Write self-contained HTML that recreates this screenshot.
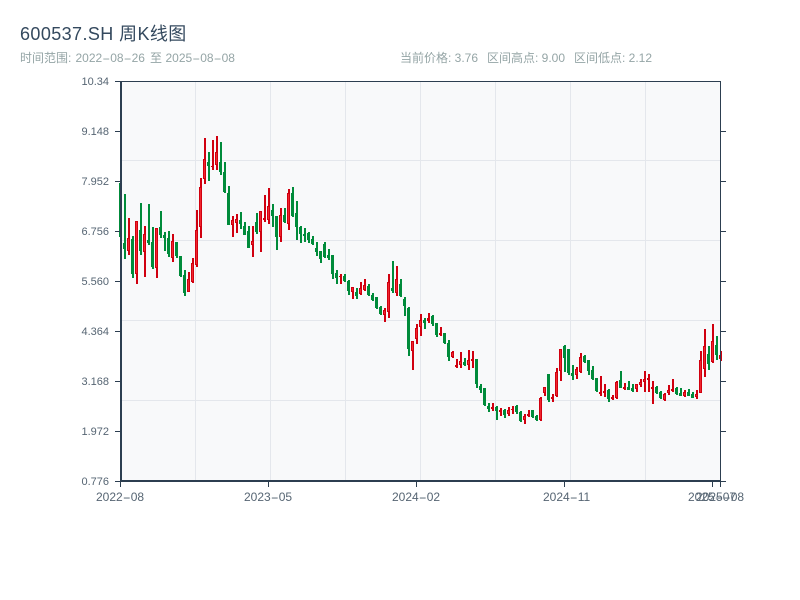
<!DOCTYPE html>
<html><head><meta charset="utf-8"><style>
html,body{margin:0;padding:0;background:#fff}
svg{display:block}
text{font-family:"Liberation Sans","Noto Sans CJK SC",sans-serif}
</style></head><body>
<svg width="800" height="600" viewBox="0 0 800 600" xmlns="http://www.w3.org/2000/svg">
<rect x="120" y="81" width="601" height="400" fill="#f8f9fa"/>
<g fill="#e4e7ec">
<rect x="121" y="160" width="600" height="1"/><rect x="121" y="240" width="600" height="1"/><rect x="121" y="320" width="600" height="1"/><rect x="121" y="400" width="600" height="1"/>
<rect x="195" y="81" width="1" height="400"/><rect x="270" y="81" width="1" height="400"/><rect x="345" y="81" width="1" height="400"/><rect x="420" y="81" width="1" height="400"/><rect x="495" y="81" width="1" height="400"/><rect x="570" y="81" width="1" height="400"/><rect x="645" y="81" width="1" height="400"/>
</g>
<path fill="none" stroke="#008b3a" stroke-width="2" d="M120 183V237M125 194V259M133 236V278M141 203V255M149 204V245M153 227V269M161 211V238M165 232V251M169 231V257M177 242V258M181 256V277M185 270V296M209 152V181M221 142V175M225 162V193M229 186V225M241 212V229M245 222V235M249 226V248M257 213V234M273 204V227M277 216V250M285 208V223M293 187V217M297 201V240M301 226V243M305 228V242M309 232V243M313 236V245M317 242V256M321 251V263M325 242V258M329 249V260M333 255V279M337 270V284M345 274V282M349 280V295M357 288V299M369 284V296M373 293V301M377 297V309M381 306V315M393 261V293M401 279V297M405 297V316M409 307V356M425 318V329M433 315V326M437 323V337M445 333V344M449 340V361M465 358V366M477 359V388M481 384V393M485 388V406M489 403V412M497 406V420M505 409V418M517 405V414M521 411V422M533 410V418M537 415V421M549 374V402M565 345V372M569 349V375M573 365V380M585 355V363M589 360V375M593 366V380M597 378V392M609 389V402M621 371V388M629 381V390M633 384V392M657 386V394M661 391V399M677 387V395M681 388V396M689 389V396M693 392V398M709 346V370M717 336V360"/>
<path fill="none" stroke="#008b3a" stroke-width="3" d="M124.5 243V249M132.5 239V274M140.5 230V251M148.5 240V243M152.5 242V267M160.5 227V235M164.5 235V238M168.5 238V254M176.5 242V256M180.5 256V276M184.5 275V293M208.5 162V166M220.5 162V172M224.5 172V192M228.5 193V225M240.5 220V224M244.5 226V235M248.5 231V248M256.5 222V232M272.5 210V216M276.5 216V237M284.5 215V222M292.5 193V216M296.5 213V227M300.5 227V234M304.5 234V236M308.5 233V240M312.5 239V244M316.5 248V252M320.5 251V259M324.5 244V257M328.5 255V258M332.5 255V274M336.5 273V278M344.5 276V281M348.5 281V291M356.5 292V296M368.5 286V295M372.5 295V300M376.5 297V308M380.5 307V314M392.5 288V291M400.5 284V296M404.5 299V306M408.5 308V349M424.5 320V323M432.5 316V324M436.5 323V335M444.5 333V343M448.5 343V357M464.5 362V365M476.5 359V384M480.5 386V390M484.5 388V405M488.5 406V409M496.5 407V411M504.5 410V415M516.5 406V412M520.5 412V421M532.5 410V417M536.5 416V420M548.5 374V400M564.5 346V358M568.5 349V373M572.5 373V376M584.5 356V362M588.5 360V371M592.5 370V379M596.5 378V391M608.5 390V399M620.5 380V388M628.5 387V390M632.5 388V391M656.5 387V393M660.5 392V398M676.5 388V394M680.5 393V396M688.5 392V396M692.5 394V398M708.5 354V364M716.5 345V355"/>
<path fill="none" stroke="#d0000f" stroke-width="2" d="M129 218V255M137 221V284M145 226V277M157 228V278M173 234V262M189 272V292M193 258V283M197 210V267M201 178V238M205 138V184M213 140V170M217 136V170M233 216V237M237 214V233M253 226V257M261 211V252M265 195V222M269 188V224M281 208V242M289 189V230M341 274V284M353 287V299M361 282V295M365 279V291M385 308V322M389 274V318M397 266V296M413 341V370M417 324V344M421 314V336M429 313V323M441 327V336M453 351V358M457 359V368M461 352V368M469 350V370M473 351V368M493 403V411M501 408V416M509 407V416M513 406V414M525 414V424M529 410V417M541 397V421M545 387V396M553 394V402M557 368V397M561 349V381M577 367V379M581 353V373M601 376V396M605 384V397M613 395V400M617 381V399M625 383V390M637 384V392M641 379V387M645 371V392M649 374V392M653 381V404M665 393V401M669 385V395M673 379V392M685 390V397M697 390V399M701 351V393M705 329V377M713 324V363M721 351V361"/>
<path fill="none" stroke="#d0000f" stroke-width="3" d="M128.5 238V251M136.5 221V274M144.5 234V252M156.5 228V268M172.5 241V258M188.5 279V292M192.5 263V282M196.5 230V265M200.5 187V227M204.5 159V179M212.5 166V167M216.5 152V165M232.5 220V225M236.5 219V223M252.5 241V245M260.5 211V232M264.5 218V220M268.5 206V220M280.5 215V237M288.5 193V224M340.5 276V277M352.5 287V292M360.5 288V294M364.5 285V290M384.5 310V315M388.5 282V312M396.5 279V293M412.5 341V351M416.5 328V339M420.5 320V327M428.5 318V321M440.5 333V335M452.5 352V357M456.5 365V367M460.5 361V365M468.5 360V365M472.5 359V361M492.5 407V409M500.5 410V412M508.5 410V414M512.5 409V410M524.5 416V420M528.5 414V416M540.5 398V420M544.5 387V393M552.5 397V399M556.5 372V396M560.5 349V371M576.5 369V375M580.5 357V372M600.5 392V394M604.5 391V393M612.5 397V399M616.5 382V398M624.5 387V389M636.5 384V389M640.5 382V385M644.5 379V382M648.5 378V380M652.5 387V389M664.5 394V400M668.5 390V393M672.5 389V391M684.5 392V396M696.5 394V397M700.5 360V393M704.5 346V369M712.5 341V362M720.5 355V359"/>
<path fill="none" stroke="#f0262e" stroke-width="1" d="M128.5 239V250M136.5 222V273M144.5 235V251M156.5 229V267M172.5 242V257M188.5 280V291M192.5 264V281M196.5 231V264M200.5 188V226M204.5 160V178M216.5 153V164M232.5 221V224M236.5 220V222M252.5 242V244M260.5 212V231M268.5 207V219M280.5 216V236M288.5 194V223M352.5 288V291M360.5 289V293M364.5 286V289M384.5 311V314M388.5 283V311M396.5 280V292M412.5 342V350M416.5 329V338M420.5 321V326M452.5 353V356M460.5 362V364M468.5 361V364M508.5 411V413M524.5 417V419M540.5 399V419M544.5 388V392M556.5 373V395M560.5 350V370M576.5 370V374M580.5 358V371M616.5 383V397M636.5 385V388M640.5 383V384M644.5 380V381M664.5 395V399M668.5 391V392M684.5 393V395M696.5 395V396M700.5 361V392M704.5 347V368M712.5 342V361M720.5 356V358"/>
<g fill="#2c3e50">
<rect x="120" y="81" width="2" height="401"/>
<rect x="120" y="480" width="601" height="2"/>
<rect x="120" y="81" width="601" height="1"/>
<rect x="720" y="81" width="1" height="400"/>
<rect x="115" y="81" width="5" height="1"/><rect x="115" y="131" width="5" height="1"/><rect x="115" y="181" width="5" height="1"/><rect x="115" y="231" width="5" height="1"/><rect x="115" y="281" width="5" height="1"/><rect x="115" y="331" width="5" height="1"/><rect x="115" y="381" width="5" height="1"/><rect x="115" y="431" width="5" height="1"/><rect x="115" y="481" width="5" height="1"/>
<rect x="721" y="131" width="5" height="1"/><rect x="721" y="181" width="5" height="1"/><rect x="721" y="231" width="5" height="1"/><rect x="721" y="281" width="5" height="1"/><rect x="721" y="331" width="5" height="1"/><rect x="721" y="381" width="5" height="1"/><rect x="721" y="431" width="5" height="1"/><rect x="721" y="481" width="5" height="1"/>
<rect x="120" y="482" width="1" height="5"/><rect x="268" y="482" width="1" height="5"/><rect x="416" y="482" width="1" height="5"/><rect x="564" y="482" width="1" height="5"/><rect x="712" y="482" width="1" height="5"/><rect x="720" y="482" width="1" height="5"/>
</g>
<text x="20" y="40" font-size="18" letter-spacing="0.4" fill="#34495e">600537.SH 周K线图</text>
<g font-size="12" fill="#95a5a6">
<text x="20" y="62">时间范围:</text>
<text x="75.5" y="62">2022<tspan textLength="8" lengthAdjust="spacingAndGlyphs">-</tspan>08<tspan textLength="8" lengthAdjust="spacingAndGlyphs">-</tspan>26</text>
<text x="150" y="62">至</text>
<text x="165.5" y="62">2025<tspan textLength="8" lengthAdjust="spacingAndGlyphs">-</tspan>08<tspan textLength="8" lengthAdjust="spacingAndGlyphs">-</tspan>08</text>
<text x="400" y="62">当前价格: 3.76</text>
<text x="487" y="62">区间高点: 9.00</text>
<text x="574" y="62">区间低点: 2.12</text>
</g>
<g font-size="11" fill="#566573" text-anchor="end">
<text x="109" y="85">10.34</text><text x="109" y="135">9.148</text><text x="109" y="185">7.952</text><text x="109" y="235">6.756</text><text x="109" y="285">5.560</text><text x="109" y="335">4.364</text><text x="109" y="385">3.168</text><text x="109" y="435">1.972</text><text x="109" y="485">0.776</text>
</g>
<g font-size="12" fill="#566573">
<text x="96" y="501">2022<tspan textLength="8" lengthAdjust="spacingAndGlyphs">-</tspan>08</text>
<text x="244" y="501">2023<tspan textLength="8" lengthAdjust="spacingAndGlyphs">-</tspan>05</text>
<text x="392" y="501">2024<tspan textLength="8" lengthAdjust="spacingAndGlyphs">-</tspan>02</text>
<text x="543" y="501">2024<tspan textLength="8" lengthAdjust="spacingAndGlyphs">-</tspan>11</text>
<text x="688" y="501">2025<tspan textLength="8" lengthAdjust="spacingAndGlyphs">-</tspan>07</text>
<text x="696" y="501">2025<tspan textLength="8" lengthAdjust="spacingAndGlyphs">-</tspan>08</text>
</g>
</svg>
</body></html>
